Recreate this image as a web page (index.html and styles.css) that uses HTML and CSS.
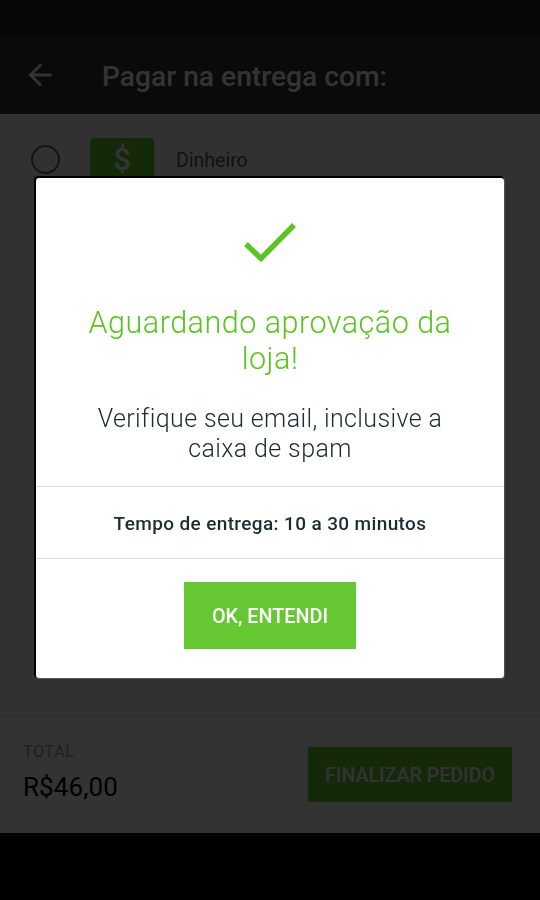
FILE: index.html
```html
<!DOCTYPE html>
<html lang="pt-BR">
<head>
  <meta charset="UTF-8">
  <title>Pagar na entrega</title>
  <link rel="stylesheet" href="styles.css">
</head>
<body>
  <div class="screen">
    <div class="status-bar"></div>

    <header class="toolbar">
      <svg class="back" width="24" height="24" viewBox="0 0 24 24" fill="none" stroke="#fff" stroke-width="2.9">
        <path d="M23.5 12H3M13 1.5L2.5 12L13 22.5"/>
      </svg>
      <h1>Pagar na entrega com:</h1>
    </header>

    <main class="payments">
      <label class="option">
        <span class="radio"></span>
        <span class="money">$</span>
        <span class="option-name">Dinheiro</span>
      </label>
    </main>

    <footer class="footer">
      <div class="total">
        <span class="total-label">TOTAL</span>
        <span class="total-value">R$46,00</span>
      </div>
      <button class="finish" type="button">FINALIZAR PEDIDO</button>
    </footer>

    <div class="nav-bar"></div>
  </div>

  <div class="overlay">
    <div class="modal">
      <div class="modal-message">
        <svg class="check" width="52" height="40" viewBox="0 0 52 40" fill="none" stroke="#5bc423" stroke-width="5.4">
          <path d="M2 21L17 35.5L50 2"/>
        </svg>
        <h2>Aguardando aprovação da<br>loja!</h2>
        <p>Verifique seu email, inclusive a<br>caixa de spam</p>
      </div>
      <div class="modal-time">Tempo de entrega: 10 a 30 minutos</div>
      <div class="modal-actions">
        <button class="ok" type="button">OK, ENTENDI</button>
      </div>
    </div>
  </div>
</body>
</html>
```
FILE: styles.css
```css
* {
  box-sizing: border-box;
}

body {
  margin: 0;
  font-family: Roboto, "Liberation Sans", sans-serif;
}

h1, h2, p {
  margin: 0;
}

button {
  border: none;
  padding: 0;
  font-family: inherit;
  font-weight: 500;
  color: #fff;
  white-space: nowrap;
}

.screen {
  display: flex;
  flex-direction: column;
  height: 900px;
}

.status-bar {
  height: 36px;
  background-color: #232323;
}

.toolbar {
  display: flex;
  align-items: center;
  height: 78px;
  padding-left: 28px;
  background-color: #323232;
  color: #fff;
}

.toolbar h1 {
  margin-left: 50px;
  padding-top: 3px;
  font-size: 28.2px;
  font-weight: 500;
}

.payments {
  flex: 1;
  padding-top: 24px;
  background-color: #f5f5f5;
}

.option {
  display: flex;
  align-items: center;
  height: 43px;
  padding-left: 31px;
}

.radio {
  width: 29px;
  height: 29px;
  border: 2.5px solid #666;
  border-radius: 50%;
}

.money {
  width: 64px;
  height: 43px;
  margin-left: 30px;
  border-radius: 4px;
  background-color: #65c832;
  color: #fff;
  font-size: 31px;
  font-weight: 500;
  line-height: 43px;
  text-align: center;
}

.option-name {
  margin-left: 22px;
  padding-top: 2px;
  font-size: 19.5px;
  color: #555;
}

.footer {
  display: flex;
  align-items: center;
  justify-content: space-between;
  height: 117px;
  padding: 0 28px 2px 23px;
  border-top: 1px solid #dcdcdc;
  background-color: #fff;
}

.total {
  display: flex;
  flex-direction: column;
}

.total-label {
  font-size: 16px;
  line-height: 20px;
  letter-spacing: 0.7px;
  color: #999;
}

.total-value {
  margin-top: 8px;
  padding-bottom: 2px;
  font-size: 26px;
  line-height: 34px;
  letter-spacing: 0.1px;
  color: #000;
}

.finish {
  width: 204px;
  height: 55px;
  padding-top: 2px;
  border-radius: 2px;
  background-color: #65c832;
  font-size: 19.6px;
}

.nav-bar {
  height: 67px;
  background-color: #000;
}

.overlay {
  position: fixed;
  top: 0;
  left: 0;
  right: 0;
  bottom: 0;
  padding: 178px 36px 0;
  background-color: rgba(0, 0, 0, 0.8);
}

.modal {
  height: 500px;
  border-radius: 3px;
  background-color: #fff;
  box-shadow: -1px -1px 0 1px #000, 0 0 1px 1px #555;
  text-align: center;
}

.modal-message {
  height: 308px;
  padding-top: 45px;
}

.check {
  display: block;
  margin: 0 auto;
}

.modal h2 {
  margin-top: 42px;
  font-size: 30.6px;
  font-weight: 350;
  line-height: 36px;
  letter-spacing: 0.45px;
  color: #5bc423;
}

.modal p {
  margin-top: 27px;
  font-size: 25px;
  font-weight: 350;
  line-height: 30px;
  letter-spacing: 0.37px;
  color: #1d2b33;
}

.modal-time {
  height: 73px;
  border-top: 1px solid #dcdcdc;
  border-bottom: 1px solid #dcdcdc;
  font-size: 19px;
  font-weight: 500;
  line-height: 74px;
  letter-spacing: 0.37px;
  color: #1d2b33;
}

.modal-actions {
  padding-top: 23px;
}

.ok {
  width: 172px;
  height: 67px;
  padding-top: 2px;
  background-color: #65c832;
  font-size: 19.8px;
}
```
